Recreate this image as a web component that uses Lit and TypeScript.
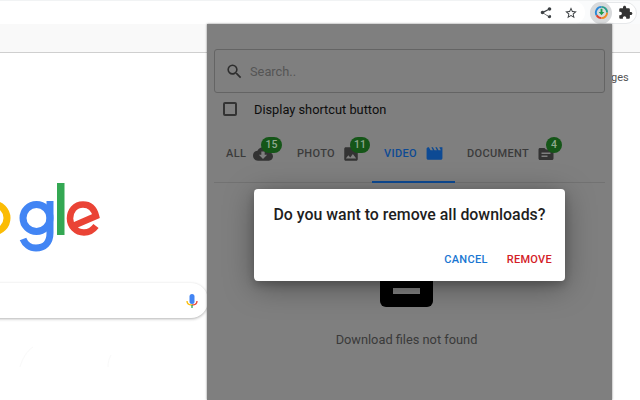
import { LitElement, html, css } from "lit";
import { customElement } from "lit/decorators.js";

@customElement("app-root")
export class AppRoot extends LitElement {
  static styles = css`
    :host { display: block; width: 640px; height: 400px; position: relative; overflow: hidden; background: #fff; font-family: Roboto, sans-serif; }
    svg { flex: none; display: block; }
    .chrome { height: 24px; background: #fafbfc; display: flex; align-items: center; border-top: 1px solid #f1f3f4; box-sizing: border-box; }
    .omni { flex: 1; height: 23px; background: #fff; border-radius: 0 12px 12px 0; display: flex; justify-content: flex-end; align-items: center; gap: 11px; padding-right: 7px; margin-right: 5px; }
    .ext { width: 47px; height: 22px; border: 1px solid #e6e8ea; box-sizing: border-box; border-radius: 11px; background: #fff; display: flex; align-items: center; justify-content: space-between; margin-right: 3px; }
    .ext-active { width: 22px; height: 22px; margin-left: -1px; border-radius: 50%; background: #d8dadc; display: flex; align-items: center; justify-content: center; }
    .strip { height: 29px; background: #f9f9f9; border-bottom: 1px solid #cfcfcf; box-sizing: border-box; }
    .stage { position: relative; height: 347px; }
    .logo { position: absolute; left: -60px; top: 130px; }
    .edge { position: absolute; left: 611px; top: 18px; font-size: 11px; color: #555; }
    .search { position: absolute; left: -30px; top: 230px; width: 238px; height: 35px; border-radius: 0 17px 17px 0; background: #fff; box-shadow: 0 1px 3px rgba(0,0,0,.3); display: flex; justify-content: flex-end; align-items: center; padding-right: 10px; box-sizing: border-box; }
    .faint { position: absolute; left: 15px; top: 290px; }
    .panel { position: absolute; left: 207px; top: 24px; width: 405px; height: 376px; background: #7f7f7f; box-shadow: 0 0 2px rgba(0,0,0,.5); padding: 25px 7px 0; box-sizing: border-box; }
    .field { height: 44px; box-sizing: border-box; border: 1px solid #646464; border-radius: 3px; display: flex; align-items: center; padding-left: 10px; gap: 6px; font-size: 12.8px; color: #555; }
    .check { display: flex; align-items: center; gap: 17px; margin: 3px 0 0 9px; height: 26px; font-size: 12.8px; color: #0d0d0d; }
    .box { width: 14px; height: 14px; box-sizing: border-box; border: 2px solid #333; border-radius: 2px; flex: none; }
    .tabs { display: flex; height: 61px; box-sizing: border-box; border-bottom: 1px solid #727272; font-size: 11px; font-weight: 500; letter-spacing: .35px; color: #3b3b3b; }
    .tab { position: relative; display: flex; align-items: center; padding: 2px 0 0 12px; gap: 7px; box-sizing: border-box; height: 61px; }
    .tab.all { width: 71px; }
    .tab.photo { width: 87px; }
    .tab.video { width: 83px; color: #0d4a94; border-bottom: 2px solid #0d4a94; padding-top: 4px; gap: 8px; }
    .tab.doc { flex: 1; gap: 8px; }
    .badge { position: absolute; top: 15px; height: 16px; box-sizing: border-box; background: #155618; border-radius: 8px; color: #8fa98f; font-size: 10.5px; font-weight: 500; letter-spacing: 0; text-align: center; line-height: 16px; }
    .b-all { left: 47px; width: 21px; }
    .b-photo { left: 65px; width: 20px; }
    .b-doc { left: 91px; width: 16px; }
    .empty { position: absolute; left: 0; right: 6px; top: 243px; display: flex; flex-direction: column; align-items: center; font-size: 12.8px; line-height: 16px; color: #3a3a3a; }
    .folder { width: 53px; height: 40px; background: #000; border-radius: 0 0 6px 6px; display: flex; justify-content: center; padding-top: 21px; box-sizing: border-box; margin-bottom: 25px; }
    .folder i { display: block; width: 27px; height: 6px; background: #7f7f7f; }
    .dialog { position: absolute; left: 254px; top: 189px; width: 311px; height: 92px; background: #fff; border-radius: 4px; box-shadow: 0 6px 30px rgba(0,0,0,.35), 0 4px 8px rgba(0,0,0,.2); display: flex; flex-direction: column; box-sizing: border-box; }
    .title { font-size: 15.9px; font-weight: 500; color: #1e1e1e; text-align: center; margin-top: 16px; line-height: 19px; }
    .actions { display: flex; justify-content: flex-end; gap: 19px; padding: 29px 13px 0 0; font-size: 11px; font-weight: 500; letter-spacing: .3px; }
    .cancel { color: #1976d2; }
    .remove { color: #d32027; }
  `;

  render() {
    return html`
      <div class="chrome">
        <div class="omni">
          <svg width="14" height="14" viewBox="0 0 24 24" fill="#3c4043"><path d="M18 16.100c-.8 0-1.400.3-2 .8l-7.100-4.200c.1-.2.1-.5.1-.7s0-.5-.1-.7L16 7.200c.5.5 1.200.8 2 .8 1.700 0 3-1.300 3-3s-1.300-3-3-3-3 1.300-3 3c0 .2 0 .5.1.7L8 8.900c-.5-.5-1.200-.8-2-.8-1.700 0-3 1.300-3 3s1.300 3 3 3c.8 0 1.500-.3 2-.8l7.100 4.200c-.1.2-.1.4-.1.6 0 1.600 1.300 2.900 2.900 2.900s2.900-1.300 2.900-2.900-1.200-3-2.800-3z"/></svg>
          <svg width="14" height="14" viewBox="0 0 24 24" fill="#3c4043"><path d="M22 9.240l-7.190-.62L12 2 9.190 8.630 2 9.240l5.460 4.730L5.820 21 12 17.270 18.180 21l-1.630-7.030L22 9.240zM12 15.400l-3.760 2.270 1-4.280-3.320-2.880 4.380-.38L12 6.100l1.710 4.040 4.380.38-3.320 2.880 1 4.280L12 15.400z"/></svg>
        </div>
        <div class="ext">
          <div class="ext-active">
            <svg width="15" height="15" viewBox="0 0 16 16">
              <path d="M8 2a6 6 0 0 0-5.200 9" fill="none" stroke="#2a88d8" stroke-width="2"/>
              <path d="M2.800 11A6 6 0 0 0 8 14" fill="none" stroke="#e0402c" stroke-width="2"/>
              <path d="M8 14a6 6 0 0 0 6-6" fill="none" stroke="#f08a24" stroke-width="2"/>
              <path d="M14 8a6 6 0 0 0-6-6" fill="none" stroke="#2a9d8a" stroke-width="2"/>
              <path d="M7 4h2v3.500h2l-3 3.500-3-3.500h2z" fill="#1f9d4a"/>
            </svg>
          </div>
          <svg style="margin-right:3px" width="15" height="15" viewBox="0 0 24 24" fill="#333"><path d="M20.500 11H19V7c0-1.100-.9-2-2-2h-4V3.500C13 2.120 11.880 1 10.500 1S8 2.120 8 3.500V5H4c-1.100 0-2 .9-2 2v3.800h1.500c1.490 0 2.700 1.210 2.700 2.700s-1.210 2.700-2.700 2.700H2V20c0 1.100.9 2 2 2h3.800v-1.500c0-1.490 1.210-2.700 2.700-2.700s2.700 1.210 2.700 2.700V22H17c1.100 0 2-.9 2-2v-4h1.500c1.380 0 2.500-1.120 2.500-2.500S21.880 11 20.500 11z"/></svg>
        </div>
      </div>
      <div class="strip"></div>
      <div class="stage">
        <div class="logo">
          <svg width="170" height="72" viewBox="0 0 170 72">
            <circle cx="53" cy="35" r="14" fill="none" stroke="#fbbc05" stroke-width="7"/>
            <circle cx="96.500" cy="35" r="13.500" fill="none" stroke="#4285f4" stroke-width="7"/>
            <path d="M110 18V50c0 10-6 15-14 15-6 0-11-4-13-9" fill="none" stroke="#4285f4" stroke-width="7"/>
            <rect x="117" y="0" width="7.500" height="52" fill="#34a853"/>
            <path d="M133 43L156 33C154 25 149 21.500 143 21.500C135 21.500 130 28 130 35.500C130 43 136 49.500 144 49.500C150 49.500 153 47 156 43" fill="none" stroke="#ea4335" stroke-width="6.500"/>
          </svg>
        </div>
        <div class="edge">ges</div>
        <div class="search">
          <svg width="12" height="14" viewBox="0 0 12 14">
            <rect x="3.500" y="0" width="5" height="10" rx="2.500" fill="#4285f4"/>
            <path d="M1 7c0 2.500 2 4 5 4" fill="none" stroke="#fbbc05" stroke-width="1.300"/>
            <path d="M11 7c0 2.500-2 4-5 4" fill="none" stroke="#ea4335" stroke-width="1.300"/>
            <path d="M6 11v3" stroke="#34a853" stroke-width="1.300"/>
          </svg>
        </div>
        <svg class="faint" width="100" height="26" viewBox="0 0 100 26" fill="none" stroke="#f9f9f9">
          <path d="M5 24C8 14 12 8 18 4"/>
          <path d="M93 24c0-5 1-8 3-12"/>
        </svg>
      </div>
      <div class="panel">
        <div class="field">
          <svg width="19" height="19" viewBox="0 0 24 24" fill="#2e2e2e"><path d="M15.500 14h-.79l-.28-.27A6.470 6.470 0 0 0 16 9.500 6.500 6.500 0 1 0 9.500 16c1.610 0 3.090-.59 4.230-1.570l.27.28v.79l5 4.990L20.490 19l-4.990-5zm-6 0C7.010 14 5 11.990 5 9.500S7.010 5 9.500 5 14 7.010 14 9.500 11.990 14 9.500 14z"/></svg>
          <span>Search..</span>
        </div>
        <div class="check"><div class="box"></div><span>Display shortcut button</span></div>
        <div class="tabs">
          <div class="tab all"><span>ALL</span>
            <svg width="20" height="20" viewBox="0 0 24 24" fill="#333"><path d="M19.350 10.040A7.490 7.490 0 0 0 12 4C9.110 4 6.600 5.640 5.350 8.040A5.994 5.994 0 0 0 0 14c0 3.310 2.690 6 6 6h13c2.760 0 5-2.240 5-5 0-2.640-2.050-4.780-4.650-4.960zM17 13l-5 5-5-5h3V9h4v4h3z"/></svg>
            <div class="badge b-all">15</div></div>
          <div class="tab photo"><span>PHOTO</span>
            <svg width="18" height="18" viewBox="0 0 24 24" fill="#333"><path d="M21 19V5c0-1.100-.9-2-2-2H5c-1.100 0-2 .9-2 2v14c0 1.100.9 2 2 2h14c1.100 0 2-.9 2-2zM8.500 13.500l2.500 3.010L14.500 12l4.500 6H5l3.500-4.500z"/></svg>
            <div class="badge b-photo">11</div></div>
          <div class="tab video"><span>VIDEO</span>
            <svg width="19" height="19" viewBox="0 0 24 24" fill="#0d4a94"><path d="M18 4l2 4h-3l-2-4h-2l2 4h-3l-2-4H8l2 4H7L5 4H4c-1.100 0-1.990.9-1.990 2L2 18c0 1.100.9 2 2 2h16c1.100 0 2-.9 2-2V4h-4z"/></svg></div>
          <div class="tab doc"><span>DOCUMENT</span>
            <svg width="18" height="18" viewBox="0 0 24 24" fill="#333"><path d="M20 6h-8l-2-2H4c-1.100 0-1.990.9-1.990 2L2 18c0 1.100.9 2 2 2h16c1.100 0 2-.9 2-2V8c0-1.100-.9-2-2-2zm-6 10H6v-2h8v2zm4-4H6v-2h12v2z"/></svg>
            <div class="badge b-doc">4</div></div>
        </div>
        <div class="empty"><div class="folder"><i></i></div><span>Download files not found</span></div>
      </div>
      <div class="dialog">
        <div class="title">Do you want to remove all downloads?</div>
        <div class="actions"><span class="cancel">CANCEL</span><span class="remove">REMOVE</span></div>
      </div>
    `;
  }
}
